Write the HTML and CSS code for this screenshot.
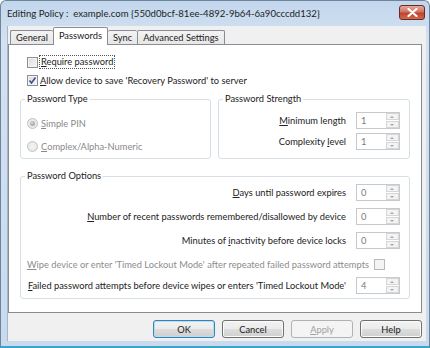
FILE: index.html
```html
<!DOCTYPE html>
<html lang="en">
<head>
    <meta charset="UTF-8">
    <title>Editing Policy</title>
    <link rel="stylesheet" href="styles.css">
</head>
<body>
<div class="window">
    <div class="titlebar">
        <span class="title">Editing Policy :&nbsp; example.com {550d0bcf-81ee-4892-9b64-6a90cccdd132}</span>
        <div class="close">
            <svg width="11" height="9" viewBox="0 0 11 9">
                <path d="M1.5 1 L9.5 8 M9.5 1 L1.5 8" stroke="#fff" stroke-width="2.2" stroke-linecap="round"/>
            </svg>
        </div>
    </div>

    <div class="client">
        <div class="tabs">
            <div class="tab">General</div>
            <div class="tab active">Passwords</div>
            <div class="tab">Sync</div>
            <div class="tab">Advanced Settings</div>
        </div>

        <div class="panel">
            <div class="check first">
                <span class="box"></span>
                <span class="focus"><u>R</u>equire password</span>
            </div>
            <div class="check">
                <span class="box checked">
                    <svg width="9" height="9" viewBox="0 0 9 9"><path d="M1.5 4.5 L3.5 7 L7.5 1.5" stroke="#3b4f8f" stroke-width="1.6" fill="none"/></svg>
                </span>
                <span><u>A</u>llow device to save 'Recovery Password' to server</span>
            </div>

            <div class="groups">
                <fieldset class="group type">
                    <legend>Password Type</legend>
                    <div class="radio first"><span class="dot on"></span><span><u>S</u>imple PIN</span></div>
                    <div class="radio"><span class="dot"></span><span><u>C</u>omplex/Alpha-Numeric</span></div>
                </fieldset>

                <fieldset class="group strength">
                    <legend>Password Strength</legend>
                    <div class="row first">
                        <span class="label"><u>M</u>inimum length</span>
                        <div class="spin"><span class="val">1</span><span class="arrows"><i class="up"></i><i class="down"></i></span></div>
                    </div>
                    <div class="row">
                        <span class="label">Complexity <u>l</u>evel</span>
                        <div class="spin"><span class="val">1</span><span class="arrows"><i class="up"></i><i class="down"></i></span></div>
                    </div>
                </fieldset>
            </div>

            <fieldset class="group options">
                <legend>Password Options</legend>
                <div class="row first">
                    <span class="label"><u>D</u>ays until password expires</span>
                    <div class="spin"><span class="val">0</span><span class="arrows"><i class="up"></i><i class="down"></i></span></div>
                </div>
                <div class="row">
                    <span class="label"><u>N</u>umber of recent passwords remembered/disallowed by device</span>
                    <div class="spin"><span class="val">0</span><span class="arrows"><i class="up"></i><i class="down"></i></span></div>
                </div>
                <div class="row">
                    <span class="label">Minutes of <u>i</u>nactivity before device locks</span>
                    <div class="spin"><span class="val">0</span><span class="arrows"><i class="up"></i><i class="down"></i></span></div>
                </div>
                <div class="row wipe">
                    <span class="label grey"><u>W</u>ipe device or enter 'Timed Lockout Mode' after repeated failed password attempts</span>
                    <span class="box small"></span>
                </div>
                <div class="row last">
                    <span class="label"><u>F</u>ailed password attempts before device wipes or enters 'Timed Lockout Mode'</span>
                    <div class="spin"><span class="val">4</span><span class="arrows"><i class="up"></i><i class="down"></i></span></div>
                </div>
            </fieldset>
        </div>

        <div class="buttons">
            <button type="button" class="btn default">OK</button>
            <button type="button" class="btn">Cancel</button>
            <button type="button" class="btn" disabled><u>A</u>pply</button>
            <button type="button" class="btn">Help</button>
        </div>
    </div>
</div>
</body>
</html>
```

FILE: styles.css
```css
body {
    margin: 0;
    background-color: #fff;
}

body * {
    font-family: 'Lato', 'Open Sans', sans-serif;
    box-sizing: border-box;
}

u {
    text-decoration-thickness: 1px;
    text-underline-offset: 1px;
}

div.window {
    width: 430px;
    height: 348px;
    display: flex;
    flex-direction: column;
    background: linear-gradient(#c2d6ec, #d3e2f2 40px, #c8daee);
    border: 1px solid #6f849c;
    border-bottom: 2px solid #3ea2cc;
    border-radius: 6px 6px 0 0;
}

/* title bar */
div.titlebar {
    height: 25px;
    display: flex;
    align-items: center;
    padding-left: 6px;
    padding-right: 4px;
}

div.titlebar span.title {
    flex: 1;
    font-size: 9.6px;
    color: #1e1e1e;
}

div.titlebar div.close {
    width: 26px;
    height: 15px;
    margin-top: -3px;
    border: 1px solid #6d2a20;
    border-radius: 3px;
    background: linear-gradient(#e3a99b, #d17461 45%, #c0432c 55%, #cf6a4f);
    display: flex;
    align-items: center;
    justify-content: center;
}

/* client area */
div.client {
    flex: 1;
    margin: 0 3px 5px 6px;
    background-color: #f0f0f0;
    border-left: 1px solid #a5b6c8;
    padding-top: 1px;
    font-size: 9.3px;
    color: #222;
}

div.tabs {
    display: flex;
    align-items: flex-end;
    height: 17px;
    padding-left: 2px;
}

div.tab {
    height: 14px;
    padding: 0 5px;
    border: 1px solid #898c95;
    border-bottom: none;
    border-right: none;
    background: linear-gradient(#f3f3f3, #e6e6e6);
    line-height: 13px;
    border-radius: 2px 2px 0 0;
}

div.tab:nth-child(4) {
    border-right: 1px solid #898c95;
}

div.tab.active {
    height: 18px;
    margin-bottom: -1px;
    padding: 0 5px;
    background: #fff;
    border-right: 1px solid #898c95;
    line-height: 15px;
    position: relative;
}

div.tab.active + div.tab {
    border-left: none;
}

div.panel {
    height: 269px;
    margin-right: 4px;
    background-color: #fff;
    border: 1px solid #898c95;
    padding: 10px 11px 0 11px;
}

/* checkboxes */
div.check {
    display: flex;
    align-items: center;
    height: 14px;
    margin-top: 4px;
    padding-left: 7px;
}

div.check.first {
    margin-top: 0;
}

span.box {
    width: 11px;
    height: 11px;
    margin-right: 2px;
    border: 1px solid #8e8f8f;
    background: linear-gradient(135deg, #dcdcdc, #f7f7f7);
    box-shadow: inset 0 0 0 1px #f4f4f4;
    display: flex;
    align-items: center;
    justify-content: center;
}

span.box.small {
    margin: 0 15px 0 5px;
    border-color: #b8b8b8;
    background: #f4f4f4;
}

span.focus {
    outline: 1px dotted #555;
    padding: 0 1px;
    line-height: 12px;
}

/* group boxes */
div.groups {
    display: flex;
    gap: 7px;
    margin-top: 6px;
}

fieldset.group {
    min-width: 0;
    margin: 0;
    padding: 0;
    border: 1px solid #d5dfe5;
    border-radius: 3px;
}

fieldset.group legend {
    padding: 0 2px;
    margin-left: 4px;
    line-height: 12px;
}

fieldset.type {
    width: 191px;
    height: 66px;
}

fieldset.strength {
    flex: 1;
    height: 66px;
}

fieldset.options {
    height: 129px;
    margin-top: 11px;
}

div.radio {
    display: flex;
    align-items: center;
    height: 14px;
    margin-top: 9px;
    padding-left: 6px;
    color: #8a8a8a;
}

div.radio.first {
    margin-top: 11px;
}

span.dot {
    width: 11px;
    height: 11px;
    margin-right: 3px;
    border: 1px solid #c2c2c2;
    border-radius: 50%;
    background: radial-gradient(#f4f4f4, #e2e2e2);
    display: flex;
    align-items: center;
    justify-content: center;
}

span.dot.on::after {
    content: "";
    width: 5px;
    height: 5px;
    border-radius: 50%;
    background: radial-gradient(circle at 40% 35%, #d6d6d6, #8f8f8f);
}

/* label + spinner rows */
div.row {
    display: flex;
    align-items: center;
    justify-content: flex-end;
    height: 17px;
    margin-top: 7px;
    padding-right: 9px;
}

fieldset.strength div.row.first {
    margin-top: 7px;
}

fieldset.strength div.row {
    margin-top: 4px;
}

fieldset.options div.row.first {
    margin-top: 2px;
}

div.row.last {
    margin-top: 4px;
}

div.row span.label {
    margin-right: 10px;
    white-space: nowrap;
}

div.row.wipe span.label {
    margin-right: 0;
}

span.grey {
    color: #8c8c8c;
}

div.spin {
    width: 44px;
    height: 17px;
    flex-shrink: 0;
    display: flex;
    border: 1px solid #c6cacf;
    background-color: #fff;
}

div.spin span.val {
    flex: 1;
    padding-left: 4px;
    color: #7a7a7a;
    line-height: 15px;
}

div.spin span.arrows {
    width: 13px;
    display: flex;
    flex-direction: column;
    gap: 1px;
}

div.spin i {
    flex: 1;
    border: 1px solid #d6d6d6;
    background: #f3f3f3;
    position: relative;
}

div.spin i::after {
    content: "";
    position: absolute;
    left: 3px;
    top: 2px;
    border-left: 2.5px solid transparent;
    border-right: 2.5px solid transparent;
}

div.spin i.up::after {
    border-bottom: 2.5px solid #a8a8a8;
}

div.spin i.down::after {
    border-top: 2.5px solid #a8a8a8;
}

/* dialog buttons */
div.buttons {
    display: flex;
    justify-content: flex-end;
    gap: 7px;
    padding-right: 4px;
    margin-top: 7px;
}

button.btn {
    width: 62px;
    height: 18px;
    padding: 0;
    font-size: 9.3px;
    color: #1a1a1a;
    border: 1px solid #707070;
    border-radius: 3px;
    background: linear-gradient(#f2f2f2, #ebebeb 50%, #dddddd 51%, #cfcfcf);
    box-shadow: inset 0 0 0 1px #fbfbfb;
}

button.btn.default {
    border-color: #3c7fb1;
    box-shadow: inset 0 0 0 1px #aee0f7;
}

button.btn:disabled {
    color: #a0a0a0;
    border-color: #adb2b5;
    background: #f4f4f4;
    box-shadow: none;
}
```
